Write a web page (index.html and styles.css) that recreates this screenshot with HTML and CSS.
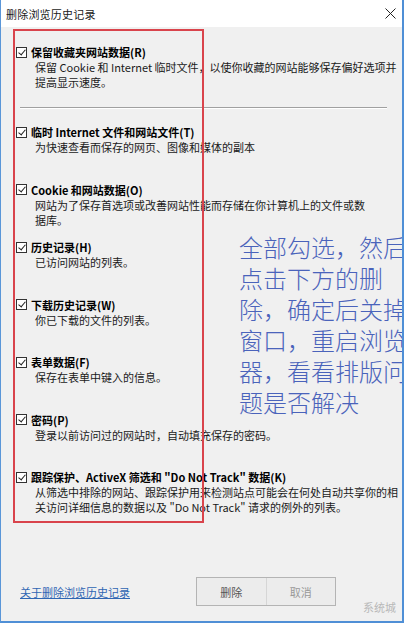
FILE: index.html
```html
<!DOCTYPE html>
<html lang="zh-CN">
<head>
    <meta charset="UTF-8">
    <meta name="viewport" content="width=device-width, initial-scale=1.0">
    <title>删除浏览历史记录</title>
    <link rel="stylesheet" href="styles.css">
</head>
<body>
    <div class="window">
        <div class="titlebar">
            <span class="title">删除浏览历史记录</span>
            <svg class="close" width="11" height="11" viewBox="0 0 11 11">
                <path d="M0.5 0.5 L10.5 10.5 M10.5 0.5 L0.5 10.5" stroke="#222" stroke-width="1" fill="none"/>
            </svg>
        </div>

        <div class="content">
            <div class="item first">
                <label class="opt"><span class="box"></span>保留收藏夹网站数据(R)</label>
                <p class="desc">保留 Cookie 和 Internet 临时文件，以使你收藏的网站能够保存偏好选项并<br>提高显示速度。</p>
            </div>

            <div class="sep"></div>

            <div class="item">
                <label class="opt"><span class="box"></span>临时 Internet 文件和网站文件(T)</label>
                <p class="desc">为快速查看而保存的网页、图像和媒体的副本</p>
            </div>
            <div class="item">
                <label class="opt"><span class="box"></span>Cookie 和网站数据(O)</label>
                <p class="desc">网站为了保存首选项或改善网站性能而存储在你计算机上的文件或数<br>据库。</p>
            </div>
            <div class="item">
                <label class="opt"><span class="box"></span>历史记录(H)</label>
                <p class="desc">已访问网站的列表。</p>
            </div>
            <div class="item">
                <label class="opt"><span class="box"></span>下载历史记录(W)</label>
                <p class="desc">你已下载的文件的列表。</p>
            </div>
            <div class="item">
                <label class="opt"><span class="box"></span>表单数据(F)</label>
                <p class="desc">保存在表单中键入的信息。</p>
            </div>
            <div class="item">
                <label class="opt"><span class="box"></span>密码(P)</label>
                <p class="desc">登录以前访问过的网站时，自动填充保存的密码。</p>
            </div>
            <div class="item">
                <label class="opt"><span class="box"></span>跟踪保护、ActiveX 筛选和 "Do Not Track" 数据(K)</label>
                <p class="desc">从筛选中排除的网站、跟踪保护用来检测站点可能会在何处自动共享你的相<br>关访问详细信息的数据以及 "Do Not Track" 请求的例外的列表。</p>
            </div>

            <div class="footer">
                <a class="link" href="#">关于删除浏览历史记录</a>
                <div class="buttons">
                    <span class="btn">删除</span>
                    <span class="btn faint">取消</span>
                </div>
            </div>
        </div>

        <!-- 标注 -->
        <div class="frame"></div>
        <div class="note">全部勾选，然后<br>点击下方的删<br>除，确定后关掉<br>窗口，重启浏览<br>器，看看排版问<br>题是否解决</div>
        <div class="mark">系统城</div>
    </div>
</body>
</html>
```

FILE: styles.css
```css
body {
    margin: 0;
    font-family: "Noto Sans CJK SC", "Noto Sans", sans-serif;
    background: #f0f0f0;
}
.window {
    position: relative;
    width: 404px;
    height: 623px;
    box-sizing: border-box;
    border-left: 1px solid #5a96d8;
    border-right: 2px solid #4f8fd6;
    border-bottom: 2px solid #4f8fd6;
    background: #f0f0f0;
    overflow: hidden;
}
.titlebar {
    height: 27px;
    background: #fff;
    display: flex;
    align-items: center;
    justify-content: space-between;
    padding: 0 6px 0 5px;
}
.title {
    font-size: 11px;
    color: #1a1a1a;
    letter-spacing: 0.2px;
}
.content {
    padding: 17px 0 0 15px;
}
.item {
    height: 57.5px;
}
.item.first {
    height: auto;
}
.opt {
    display: flex;
    align-items: center;
    height: 16px;
    font-size: 11px;
    font-weight: 700;
    color: #000;
}
.box {
    position: relative;
    width: 9px;
    height: 9px;
    border: 1px solid #333;
    background: #fff;
    margin-right: 4px;
    flex-shrink: 0;
}
.box::after {
    content: "";
    position: absolute;
    left: 3px;
    top: 0;
    width: 3px;
    height: 6px;
    border-right: 1px solid #222;
    border-bottom: 1px solid #222;
    transform: rotate(40deg);
}
.desc {
    margin: 0 0 0 19px;
    font-size: 11px;
    line-height: 15px;
    color: #1a1a1a;
    white-space: nowrap;
}
.sep {
    margin: 17px 0 15px 4px;
    width: 367px;
    border-top: 1px solid #a0a0a0;
    border-bottom: 1px solid #fff;
}
.footer {
    display: flex;
    align-items: center;
    height: 29px;
    margin-top: 50.5px;
    padding-left: 4px;
}
.link {
    width: 176px;
    font-size: 11px;
    color: #2f66b3;
    text-decoration: underline;
}
.buttons {
    display: flex;
    width: 138px;
    height: 27px;
    border: 1px solid #b4b4b4;
    background: #ececec;
}
.btn {
    flex: 1;
    display: flex;
    align-items: center;
    justify-content: center;
    font-size: 11px;
    color: #555;
}
.btn.faint {
    color: #999;
    border-left: 1px solid #d6d6d6;
}
.frame {
    position: absolute;
    left: 12px;
    top: 29px;
    width: 191px;
    height: 494px;
    box-sizing: border-box;
    border: 2px solid #d9444c;
}
.note {
    position: absolute;
    left: 238px;
    top: 231px;
    font-size: 24px;
    font-weight: 300;
    line-height: 31px;
    color: #4a63bb;
    white-space: nowrap;
}
.mark {
    position: absolute;
    right: 6px;
    bottom: 6px;
    font-size: 11px;
    color: #b8b8b8;
}
```
